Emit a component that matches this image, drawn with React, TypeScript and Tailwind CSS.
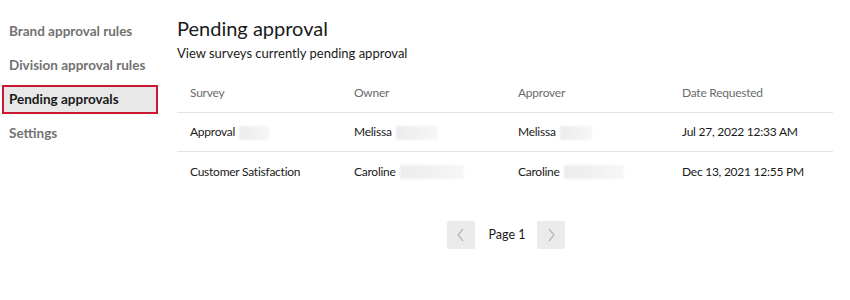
import React from "react";

const Blur = ({ w }: { w: number }) => (
  <span
    className="inline-block h-[14px] align-middle ml-[4px] rounded-[1px] bg-gradient-to-r from-[#ececec] via-[#f1f1f1] to-[#f7f7f7] blur-[1px]"
    style={{ width: w }}
  />
);

const rows = [
  { survey: "Approval", sb: 30, owner: "Melissa", ob: 42, approver: "Melissa", ab: 32, date: "Jul 27, 2022 12:33 AM" },
  { survey: "Customer Satisfaction", sb: 0, owner: "Caroline", ob: 64, approver: "Caroline", ab: 60, date: "Dec 13, 2021 12:55 PM" },
];

export default function App() {
  return (
    <div className="w-[850px] h-[300px] bg-white flex text-[#1a1a1a]" style={{ fontFamily: 'Lato, "Noto Sans", sans-serif' }}>
      <div className="w-[177px] shrink-0 pt-[17px] pl-[2px]">
        {["Brand approval rules", "Division approval rules", "Pending approvals", "Settings"].map((t, i) => (
          <div
            key={t}
            className={
              "w-[156px] h-[29px] mb-[5px] flex items-center pl-[5px] text-[13.5px] font-bold whitespace-nowrap " +
              (i === 2 ? "border-2 border-[#c8192e] bg-[#e8e8e8] text-[#1a1a1a]" : "border-2 border-transparent text-[#727272]")
            }
          >
            {t}
          </div>
        ))}
      </div>
      <div className="w-[656px] pt-[15px]">
        <h1 className="text-[20px] leading-[26px] font-normal text-[#1a1a1a]">Pending approval</h1>
        <p className="text-[13px] mt-[3px] leading-[18px]">View surveys currently pending approval</p>
        <div className="mt-[12px] text-[12px] tracking-[-0.25px]">
          <div className="grid grid-cols-4 h-[39px] items-center border-b border-[#e3e3e3] text-[#6b6b6b]">
            <div className="pl-[13px]">Survey</div>
            <div className="pl-[13px]">Owner</div>
            <div className="pl-[13px]">Approver</div>
            <div className="pl-[13px]">Date Requested</div>
          </div>
          {rows.map((r, i) => (
            <div key={r.date} className={"grid grid-cols-4 h-[39px] items-center " + (i === 0 ? "border-b border-[#e3e3e3]" : "")}>
              <div className="pl-[13px] whitespace-nowrap">{r.survey}{r.sb ? <Blur w={r.sb} /> : null}</div>
              <div className="pl-[13px] whitespace-nowrap">{r.owner}<Blur w={r.ob} /></div>
              <div className="pl-[13px] whitespace-nowrap">{r.approver}<Blur w={r.ab} /></div>
              <div className="pl-[13px] whitespace-nowrap">{r.date}</div>
            </div>
          ))}
        </div>
        <div className="flex items-center justify-center mt-[30px] pl-[2px]">
          <button className="w-[28px] h-[28px] rounded-[2px] bg-[#ebebeb] flex items-center justify-center">
            <svg width="10" height="14" viewBox="0 0 10 14" fill="none" stroke="#b5b5b5" strokeWidth="1.2"><path d="M7 1 L2 7 L7 13" /></svg>
          </button>
          <span className="text-[12.5px] text-[#1a1a1a] ml-[14px] mr-[12px]">Page 1</span>
          <button className="w-[28px] h-[28px] rounded-[2px] bg-[#ebebeb] flex items-center justify-center">
            <svg width="10" height="14" viewBox="0 0 10 14" fill="none" stroke="#b5b5b5" strokeWidth="1.2"><path d="M3 1 L8 7 L3 13" /></svg>
          </button>
        </div>
      </div>
    </div>
  );
}
